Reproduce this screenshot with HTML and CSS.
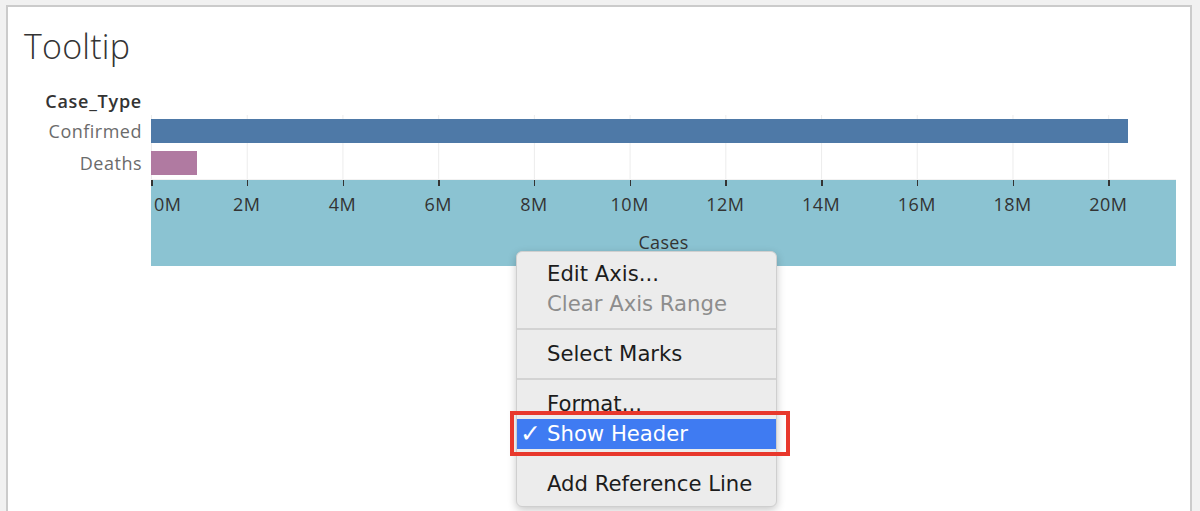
FILE: index.html
```html
<!DOCTYPE html>
<html>
<head>
<meta charset="utf-8">
<link rel="stylesheet" href="styles.css">
</head>
<body>
<div class="panel">
  <h1 class="title">Tooltip</h1>
  <div class="chart">
    <div class="hdr">Case_Type</div>
    <div class="hdr-plot"></div>
    <div class="lbl">Confirmed</div>
    <div class="plot"><div class="bar confirmed" style="width:976.7px"></div></div>
    <div class="lbl">Deaths</div>
    <div class="plot"><div class="bar deaths" style="width:46px"></div></div>
    <div class="axis-spacer"></div>
    <div class="axis">
      <div class="tick" style="left:0px"></div>
      <div class="tick" style="left:95.7px"></div>
      <div class="tick" style="left:191.5px"></div>
      <div class="tick" style="left:287.2px"></div>
      <div class="tick" style="left:382.9px"></div>
      <div class="tick" style="left:478.7px"></div>
      <div class="tick" style="left:574.4px"></div>
      <div class="tick" style="left:670.1px"></div>
      <div class="tick" style="left:765.8px"></div>
      <div class="tick" style="left:861.6px"></div>
      <div class="tick" style="left:957.3px"></div>
      <span class="tl first" style="left:3px">0M</span>
      <span class="tl" style="left:95.7px">2M</span>
      <span class="tl" style="left:191.5px">4M</span>
      <span class="tl" style="left:287.2px">6M</span>
      <span class="tl" style="left:382.9px">8M</span>
      <span class="tl" style="left:478.7px">10M</span>
      <span class="tl" style="left:574.4px">12M</span>
      <span class="tl" style="left:670.1px">14M</span>
      <span class="tl" style="left:765.8px">16M</span>
      <span class="tl" style="left:861.6px">18M</span>
      <span class="tl" style="left:957.3px">20M</span>
      <div class="axis-title">Cases</div>
    </div>
  </div>
</div>

<div class="menu">
  <div class="item">Edit Axis...</div>
  <div class="item disabled">Clear Axis Range</div>
  <div class="sep"></div>
  <div class="item">Select Marks</div>
  <div class="sep"></div>
  <div class="item">Format...</div>
  <div class="item selected"><span class="check">✓</span>Show Header</div>
  <div class="gap"></div>
  <div class="item">Add Reference Line</div>
</div>
<div class="highlight-box"></div>
</body>
</html>
```

FILE: styles.css
```css
html, body {
  margin: 0;
  padding: 0;
}
body {
  background: #f1f1f1;
  height: 511px;
  overflow: hidden;
  font-family: "Open Sans", "Liberation Sans", sans-serif;
}
.panel {
  margin: 5px 0 0 6px;
  width: 1186px;
  height: 520px;
  box-sizing: border-box;
  background: #ffffff;
  border: 2px solid #cbcbcb;
  border-bottom: none;
  padding: 22px 0 0 16px;
}
.title {
  margin: 0;
  font-size: 34px;
  line-height: 34px;
  font-weight: 300;
  color: #333333;
  letter-spacing: 0.2px;
}
.chart {
  margin: 25px 0 0 -16px;
  display: grid;
  grid-template-columns: 143px 1025px;
  grid-template-rows: 27px 32px 32px 1px 86px;
}
.hdr {
  text-align: right;
  padding-right: 9px;
  font-size: 18px;
  font-weight: 600;
  letter-spacing: 0.75px;
  color: #333333;
  line-height: 27px;
}
.lbl {
  text-align: right;
  padding-right: 9px;
  font-size: 18px;
  letter-spacing: 0.5px;
  color: #6b6b6b;
  line-height: 32px;
}
.plot {
  background-image: linear-gradient(to right, #ececec 1px, transparent 1px);
  background-size: 95.73px 100%;
  background-position: 95.73px 0;
  background-repeat: repeat-x;
  display: flex;
  align-items: center;
}
.bar {
  height: 24px;
}
.bar.confirmed { background: #4e79a7; }
.bar.deaths { background: #b07aa1; }
.axis-spacer {
  grid-column: 1 / span 2;
  background: linear-gradient(to right, #ffffff 143px, #f2f2f2 143px);
}
.axis {
  grid-column: 2;
  position: relative;
  background: #8bc3d2;
  display: flex;
  flex-direction: column;
  justify-content: flex-end;
  align-items: center;
}
.tick {
  position: absolute;
  top: 0;
  width: 1.5px;
  height: 6px;
  background: #333333;
}
.tl {
  position: absolute;
  top: 11px;
  transform: translateX(-50%);
  font-size: 18px;
  letter-spacing: 0.5px;
  line-height: 26px;
  color: #333333;
}
.tl.first {
  transform: none;
}
.axis-title {
  font-size: 18px;
  letter-spacing: 0.3px;
  color: #333333;
  line-height: 24px;
  margin-bottom: 12px;
}
.menu {
  position: absolute;
  left: 516px;
  top: 251px;
  width: 261px;
  box-sizing: border-box;
  padding: 7px 0;
  background: #ececec;
  border: 1px solid #cfcfcf;
  border-radius: 6px;
  box-shadow: 0 3px 8px rgba(0, 0, 0, 0.22);
  font-family: "DejaVu Sans", "Inter", sans-serif;
  font-size: 21.2px;
  color: #1c1c1c;
}
.item {
  height: 30px;
  line-height: 30px;
  padding-left: 30px;
  position: relative;
  white-space: nowrap;
}
.item.disabled {
  color: #8d8d8d;
}
.item.selected {
  background: #3f7bf2;
  color: #ffffff;
}
.check {
  position: absolute;
  left: 3px;
  top: 0;
  font-family: "DejaVu Sans", sans-serif;
  font-weight: bold;
  font-size: 25px;
}
.sep {
  height: 2px;
  background: #d3d3d3;
  margin: 9px 0 9px;
}
.gap {
  height: 20px;
}
.highlight-box {
  position: absolute;
  left: 510px;
  top: 411px;
  width: 280px;
  height: 45px;
  box-sizing: border-box;
  border: 4px solid #e8382c;
}
```
